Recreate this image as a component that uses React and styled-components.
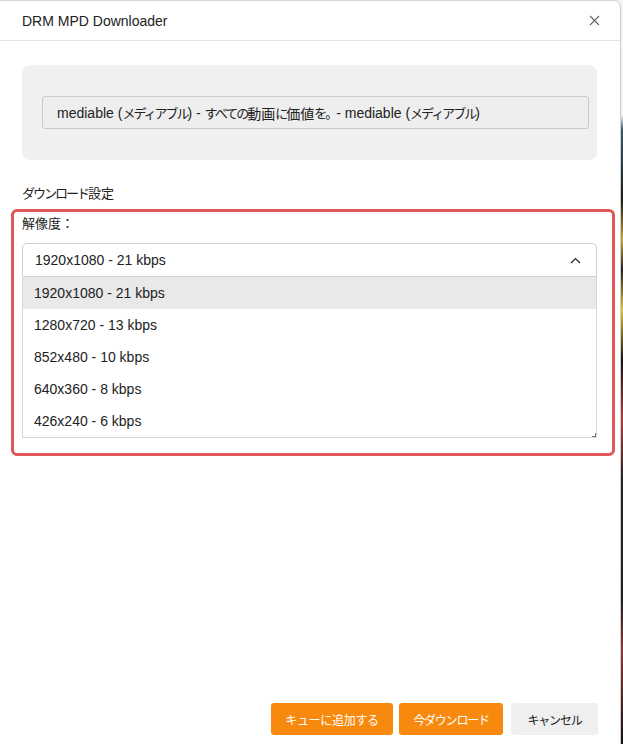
import React, { useState } from "react"
import styled, { createGlobalStyle } from "styled-components"

const GlobalStyle = createGlobalStyle`
  html, body {
    margin: 0;
    padding: 0;
    height: 100%;
  }
  body {
    font-family: "Liberation Sans", "Noto Sans CJK JP", sans-serif;
    background:
      linear-gradient(
        to bottom,
        #f4f4f4 0,
        #f4f4f4 115px,
        #3a5a6a 130px,
        #1a1a1a 200px,
        #c9a23a 240px,
        #202020 270px,
        #e2c23c 310px,
        #111 360px,
        #b04040 420px,
        #222 480px,
        #1e1e1e 600px,
        #8a3a3a 650px,
        #111 744px
      );
  }
`

const resolutions = [
  "1920x1080 - 21 kbps",
  "1280x720 - 13 kbps",
  "852x480 - 10 kbps",
  "640x360 - 8 kbps",
  "426x240 - 6 kbps",
]

const App = () => {
  const [selected, setSelected] = useState(0)

  return (
    <>
      <GlobalStyle />
      <Dialog>
        <Header>
          <Title>DRM MPD Downloader</Title>
          <CloseButton type="button" aria-label="close">
            <svg width="11" height="11" viewBox="0 0 11 11">
              <path d="M1 1 L10 10 M10 1 L1 10" stroke="#666" strokeWidth="1.1" fill="none" />
            </svg>
          </CloseButton>
        </Header>

        <Body>
          <InfoBox>
            <TitleField>
              mediable (<Kana>メディアブル</Kana>) - <Kana>すべての</Kana>動画<Kana>に</Kana>価値<Kana>を。</Kana>- mediable (<Kana>メディアブル</Kana>)
            </TitleField>
          </InfoBox>

          <SectionLabel>
            <Kana>ダウンロード</Kana>設定
          </SectionLabel>

          <Highlight>
            <FieldLabel>解像度：</FieldLabel>
            <SelectBox>
              <span>{resolutions[selected]}</span>
              <svg width="11" height="7" viewBox="0 0 11 7">
                <path d="M1 6 L5.5 1.5 L10 6" stroke="#222" strokeWidth="1.2" fill="none" />
              </svg>
            </SelectBox>
            <OptionList>
              {resolutions.map((r, i) => (
                <Option key={r} $active={i === selected} onClick={() => setSelected(i)}>
                  {r}
                </Option>
              ))}
              <ResizeGrip />
            </OptionList>
          </Highlight>
        </Body>

        <Footer>
          <Button $primary $w={122}>キューに追加する</Button>
          <Button $primary $w={104} $tight>今ダウンロード</Button>
          <Button $w={87} $tight>キャンセル</Button>
        </Footer>
      </Dialog>
    </>
  )
}

const Dialog = styled.div`
  box-sizing: border-box;
  width: 621px;
  height: 744px;
  display: flex;
  flex-direction: column;
  background: #fff;
  border-top: 1px solid #d8d8d8;
  border-right: 1px solid #cfcfcf;
  border-top-right-radius: 7px;
`
const Header = styled.div`
  height: 39px;
  display: flex;
  align-items: center;
  justify-content: space-between;
  padding: 0 20px 0 22px;
  border-bottom: 1px solid #e2e2e2;
`
const Title = styled.div`
  font-size: 14px;
  color: #222;
`
const CloseButton = styled.button`
  border: 0;
  background: none;
  padding: 0;
  display: flex;
  cursor: pointer;
`
const Kana = styled.span`
  font-size: 13px;
  letter-spacing: -2px;
`
const Body = styled.div`
  padding: 24px 23px 0 22px;
`
const InfoBox = styled.div`
  background: #f0f0f0;
  border-radius: 8px;
  padding: 31px 8px 31px 20px;
`
const TitleField = styled.div`
  box-sizing: border-box;
  height: 33px;
  display: flex;
  align-items: center;
  white-space: pre;
  padding: 0 14px;
  border: 1px solid #c9c9c9;
  border-radius: 3px;
  background: #eeeeee;
  font-size: 14px;
  color: #222;
`
const SectionLabel = styled.div`
  margin-top: 25px;
  font-size: 13px;
  line-height: 18px;
  color: #222;
`
const Highlight = styled.div`
  margin: 6px -18px 0 -11px;
  border: 3px solid #e05757;
  border-radius: 6px;
  padding: 3px 15px 15px 8px;
`
const FieldLabel = styled.div`
  font-size: 13px;
  line-height: 18px;
  color: #222;
`
const SelectBox = styled.div`
  box-sizing: border-box;
  margin-top: 10px;
  height: 34px;
  display: flex;
  align-items: center;
  justify-content: space-between;
  padding: 0 15px 0 12px;
  border: 1px solid #cfcfcf;
  border-radius: 5px 5px 0 0;
  font-size: 14px;
  color: #222;
`
const OptionList = styled.div`
  position: relative;
  border: 1px solid #d6d6d6;
  border-top: 0;
`
const Option = styled.div`
  height: 32px;
  display: flex;
  align-items: center;
  padding-left: 11px;
  font-size: 14px;
  color: #222;
  background: ${(p) => (p.$active ? "#e9e9e9" : "#fff")};
  cursor: default;
`
const ResizeGrip = styled.span`
  position: absolute;
  right: 0;
  bottom: 0;
  width: 3px;
  height: 3px;
  border-right: 1px solid #777;
  border-bottom: 1px solid #777;
`
const Footer = styled.div`
  margin-top: auto;
  display: flex;
  justify-content: flex-end;
  gap: 6px;
  padding: 0 22px 9px 0;
  & > :last-child {
    margin-left: 2px;
  }
`
const Button = styled.button`
  width: ${(p) => p.$w}px;
  height: 32px;
  border: 0;
  border-radius: 3px;
  font-family: "Noto Sans CJK JP", "Liberation Sans", sans-serif;
  font-size: 12px;
  letter-spacing: ${(p) => (p.$tight ? "-1.2px" : "-0.3px")};
  color: ${(p) => (p.$primary ? "#fff" : "#222")};
  background: ${(p) => (p.$primary ? "#f78a0e" : "#efefef")};
  cursor: pointer;
`

export default App
